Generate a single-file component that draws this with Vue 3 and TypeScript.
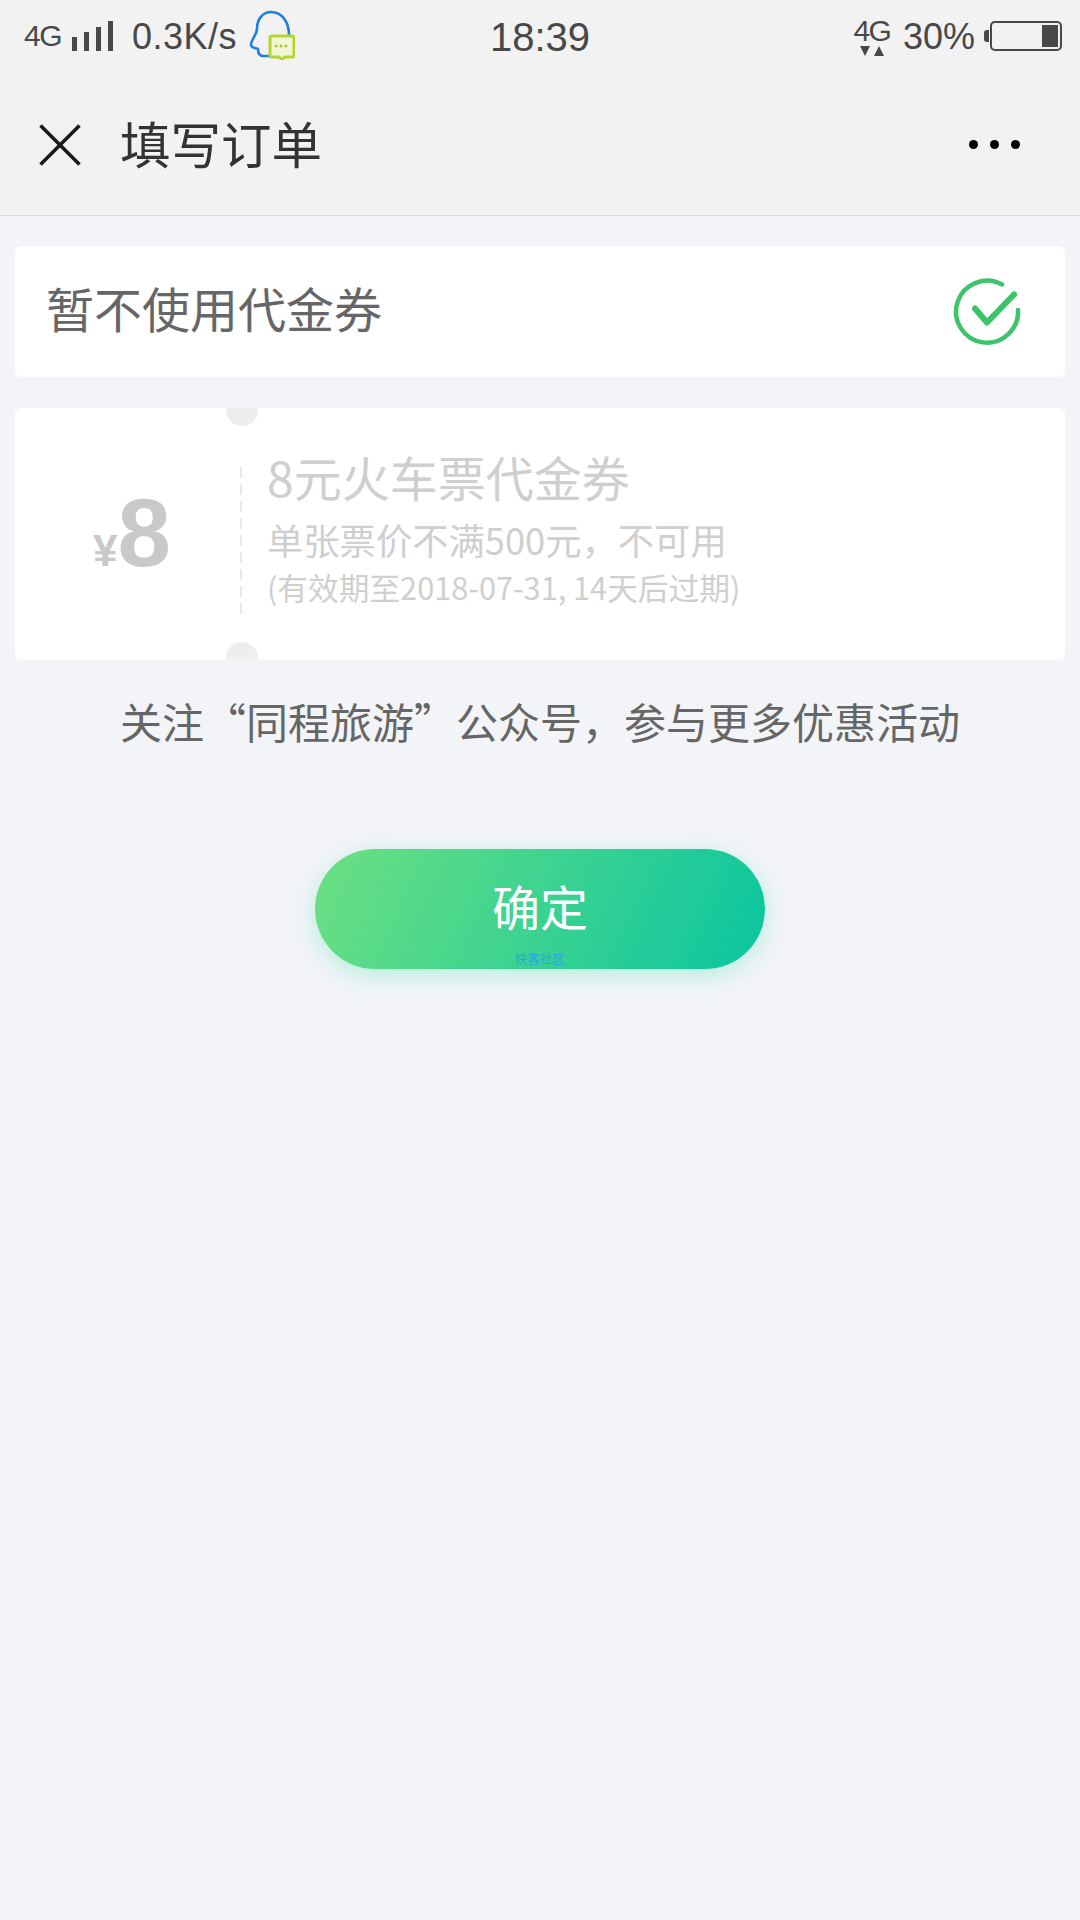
<script setup lang="ts">
const signalBars = [14, 19, 24, 30]
</script>

<template>
  <div class="page">
    <header class="top">
      <div class="status">
        <div class="status-left">
          <span class="net">4G</span>
          <span class="signal">
            <i v-for="h in signalBars" :key="h" :style="{ height: h + 'px' }"></i>
          </span>
          <span class="speed">0.3K/s</span>
          <svg class="qq" width="46" height="50" viewBox="0 0 46 50">
            <path d="M40 25C40 12 33 2 22 2C13 2 8 10 8 19C8 24 2 30 2 35C2 38 7 38 9 39C9 43 10 46 14 46L21 46" fill="none" stroke="#1f7fe0" stroke-width="2.6" stroke-linecap="round" stroke-linejoin="round" />
            <path d="M23 26h20a2 2 0 0 1 2 2v17a2 2 0 0 1-2 2H36l-3 2.500-3-2.500h-7a2 2 0 0 1-2-2V28a2 2 0 0 1 2-2z" fill="#eff5d5" stroke="#b2d62e" stroke-width="3" />
            <circle cx="27" cy="36" r="1.500" fill="#a5cc2a" />
            <circle cx="32" cy="36" r="1.500" fill="#a5cc2a" />
            <circle cx="37" cy="36" r="1.500" fill="#a5cc2a" />
          </svg>
        </div>
        <div class="clock">18:39</div>
        <div class="status-right">
          <div class="net-up">
            <span>4G</span>
            <svg width="24" height="10" viewBox="0 0 24 10">
              <polygon points="0,0 10,0 5,10" fill="#484848" />
              <polygon points="14,10 24,10 19,0" fill="#484848" />
            </svg>
          </div>
          <span class="percent">30%</span>
          <div class="battery"><i class="fill"></i></div>
        </div>
      </div>
      <nav class="nav">
        <svg class="close" width="42" height="42" viewBox="0 0 42 42">
          <path d="M1.500 1.500l39 39M40.500 1.500l-39 39" stroke="#1a1a1a" stroke-width="3.600" fill="none" />
        </svg>
        <h1 class="title">填写订单</h1>
        <div class="more"><i></i><i></i><i></i></div>
      </nav>
    </header>

    <main class="body">
      <section class="card none-row">
        <span>暂不使用代金券</span>
        <svg width="70" height="70" viewBox="0 0 70 70">
          <path d="M50 7.500A31 31 0 1 0 66 33" fill="none" stroke="#3cc46b" stroke-width="4.500" stroke-linecap="round" />
          <path d="M23 31.500l12 14 27-28" fill="none" stroke="#3cc46b" stroke-width="6" stroke-linecap="round" stroke-linejoin="round" />
        </svg>
      </section>

      <section class="card coupon">
        <div class="amount"><small>¥</small><b>8</b></div>
        <div class="divider"></div>
        <div class="info">
          <div class="name">8元火车票代金券</div>
          <div class="rule">单张票价不满500元，不可用</div>
          <div class="date">(有效期至2018-07-31, 14天后过期)</div>
        </div>
        <i class="notch notch-top"></i>
        <i class="notch notch-bottom"></i>
      </section>

      <p class="tip">关注“同程旅游”公众号，参与更多优惠活动</p>

      <button class="confirm" type="button">
        确定
        <span class="watermark">快客社区</span>
      </button>
    </main>
  </div>
</template>

<style>
html, body { margin: 0; background: #f2f4f8; }
</style>

<style scoped>
.page {
  min-height: 1920px;
  width: 1080px;
  background: #f2f4f8;
  font-family: "Noto Sans CJK SC", "Liberation Sans", sans-serif;
  overflow: hidden;
}
.top { background: #f2f2f2; border-bottom: 1px solid #dcdde0; height: 216px; box-sizing: border-box; }
.status {
  height: 72px; position: relative; display: flex; justify-content: space-between; color: #484848;
  font-family: "Liberation Sans", sans-serif;
}
.status-left { display: flex; align-items: flex-start; padding: 0 0 0 24px; }
.net { font-size: 30px; line-height: 34px; margin-top: 19px; letter-spacing: -1.5px; width: 48px; }
.signal { display: flex; align-items: flex-end; gap: 7px; height: 30px; margin-top: 21px; width: 60px; }
.signal i { display: block; width: 5px; background: #484848; }
.speed { font-size: 36px; line-height: 40px; margin-top: 17px; width: 117px; letter-spacing: 0.5px; }
.qq { margin-top: 10px; }
.clock {
  position: absolute; left: 0; right: 0; top: 15px; text-align: center;
  font-size: 40px; line-height: 44px;
}
.status-right { display: flex; align-items: flex-start; padding-right: 18px; }
.net-up { width: 40px; margin-top: 16px; display: flex; flex-direction: column; align-items: center; font-size: 30px; line-height: 29px; letter-spacing: -1.5px; margin-right: 11px; }
.net-up svg { display: block; margin-top: 1px; }
.percent { font-size: 36px; line-height: 40px; margin-top: 17px; margin-right: 15px; }
.battery {
  position: relative; width: 72px; height: 30px; margin-top: 21px; box-sizing: border-box;
  border: 2.5px solid #484848; border-radius: 5px;
}
.battery::before {
  content: ""; position: absolute; left: -8px; top: 7px; width: 5px; height: 12px;
  background: #484848; border-radius: 3px 0 0 3px;
}
.fill { position: absolute; right: 2px; top: 2px; bottom: 2px; width: 16px; background: #484848; }

.nav { height: 143px; display: flex; align-items: center; padding: 2px 60px 0 39px; box-sizing: border-box; }
.close { flex: none; }
.title { margin: -5px 0 0 39px; font-size: 50.5px; font-weight: 400; color: #333; flex: 1; line-height: 60px; }
.more { display: flex; gap: 12px; }
.more i { display: block; width: 9px; height: 9px; border-radius: 50%; background: #000; }

.body { padding: 30px 15px 0; display: flex; flex-direction: column; align-items: stretch; }
.card { background: #fff; border-radius: 6px; }
.none-row {
  height: 131px; display: flex; align-items: center; justify-content: space-between;
  padding: 0 43px 0 31px; font-size: 48px; color: #666;
}
.none-row span { margin-top: -9px; line-height: 60px; }
.coupon { position: relative; overflow: hidden; height: 252px; margin-top: 31px; display: flex; }
.amount {
  width: 226px; flex: none; display: flex; align-items: baseline; justify-content: center;
  color: #c9c9c9; padding: 70px 10px 0 0; box-sizing: border-box; font-weight: 700;
  font-family: "Liberation Sans", sans-serif;
}
.amount small { font-size: 44px; margin-left: 18px; }
.amount b { font-size: 96px; line-height: 110px; }
.divider {
  width: 2px; height: 151px; margin-top: 59px; margin-left: -1px; flex: none;
  background: repeating-linear-gradient(#e9e9e9 0 11px, transparent 11px 17px);
}
.info { padding: 40px 0 0 25px; color: #cfcfcf; }
.name { font-size: 48px; line-height: 56px; }
.rule { font-size: 36.3px; line-height: 44px; margin-top: 13px; white-space: nowrap; }
.date { font-size: 30.7px; line-height: 40px; margin-top: 6px; white-space: nowrap; }
.notch { position: absolute; left: 211px; width: 32px; height: 32px; border-radius: 50%; background: #eeeeee; }
.notch-top { top: -14px; }
.notch-bottom { bottom: -14px; }

.tip { margin: 33px 0 0; text-align: center; font-size: 42px; line-height: 56px; color: #666; }
.confirm {
  position: relative; align-self: center; width: 450px; height: 120px; margin-top: 100px; padding: 0 0 8px; border: 0;
  border-radius: 60px; background: linear-gradient(115deg, #6de082 0%, #0ac5a0 100%);
  box-shadow: 0 6px 22px rgba(70, 230, 170, 0.35);
  color: #fff; font-family: inherit; font-size: 48px;
}
.watermark {
  position: absolute; left: 0; right: 0; bottom: 1px; text-align: center;
  font-size: 12.5px; line-height: 18px; color: #2aa6dc;
}
</style>
